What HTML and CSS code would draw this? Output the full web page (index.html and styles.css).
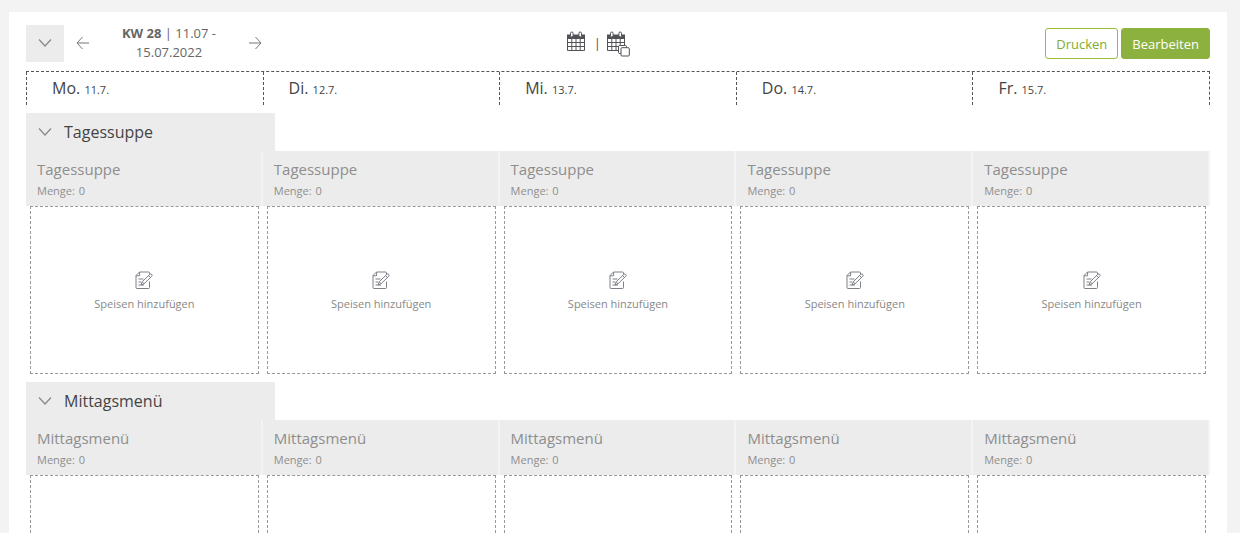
FILE: index.html
```html
<!DOCTYPE html>
<html lang="de">
<head>
<meta charset="utf-8">
<title>Speiseplan KW 28</title>
<link rel="stylesheet" href="styles.css">
</head>
<body>
<svg class="defs" aria-hidden="true">
  <symbol id="chevron" viewBox="0 0 14 10"><path d="M1 1.500 7 8 13 1.500"/></symbol>
  <symbol id="arrow" viewBox="0 0 14 14"><path d="M1 7H13M7.500 1 13 7 7.500 13"/></symbol>
  <symbol id="calendar" viewBox="0 0 20 21">
    <path fill="none" stroke="currentColor" stroke-width="1" d="M1.500 4V19.500H18.500V4M1.500 11.500H18.500M1.500 15.500H18.500M5.800 7V19.400M10 7V19.400M14.200 7V19.400"/>
    <path fill="currentColor" d="M1 3.500H19V8H1Z"/>
    <rect x="4.500" y="1" width="2.600" height="5" rx="1.300" fill="#fff" stroke="currentColor"/>
    <rect x="12.900" y="1" width="2.600" height="5" rx="1.300" fill="#fff" stroke="currentColor"/>
  </symbol>
  <symbol id="note" viewBox="0 0 18 18">
    <path d="M14.500 10.500V16.500Q14.500 17.500 13.500 17.500H2Q1 17.500 1 16.500V4.500L4.500 1H13.500Q14.500 1 14.500 2V3M1 4.800H4.600V1M3.500 8H8.500M3.500 11H6M3.500 14H9"/>
    <path d="M6 14 7.200 10.800 15 3.200Q16 2.500 16.800 3.400 17.600 4.300 16.800 5.200L9 12.800ZM7.200 10.800 9 12.800M13.600 4.600 15.400 6.500"/>
  </symbol>
</svg>
<main class="page">
  <div class="card">
    <header class="toolbar">
      <div class="week">
        <button class="toggle" type="button" aria-label="Alle einklappen"><svg class="chevron"><use href="#chevron"/></svg></button>
        <button class="arrow" type="button" aria-label="Vorherige Woche"><svg class="flip"><use href="#arrow"/></svg></button>
        <p class="range"><strong>KW 28</strong> | 11.07 - 15.07.2022</p>
        <button class="arrow" type="button" aria-label="Nächste Woche"><svg><use href="#arrow"/></svg></button>
      </div>
      <div class="views">
        <button type="button" aria-label="Kalender"><svg class="calendar"><use href="#calendar"/></svg></button>
        <span class="divider">|</span>
        <button type="button" aria-label="Kalender kopieren">
          <svg class="copy" viewBox="0 0 24 26">
            <use href="#calendar" width="20" height="21"/>
            <g fill="#fff" stroke="currentColor"><rect x="12.500" y="14.500" width="8" height="8" rx="1"/><rect x="15" y="16.700" width="8.300" height="8.300" rx="1"/></g>
          </svg>
        </button>
      </div>
      <div class="actions">
        <button class="btn" type="button">Drucken</button>
        <button class="btn primary" type="button">Bearbeiten</button>
      </div>
    </header>
    <div class="days">
      <div class="day">Mo. <small>11.7.</small></div>
      <div class="day">Di. <small>12.7.</small></div>
      <div class="day">Mi. <small>13.7.</small></div>
      <div class="day">Do. <small>14.7.</small></div>
      <div class="day">Fr. <small>15.7.</small></div>
    </div>
    <section class="group">
      <h2><button type="button"><svg class="chevron"><use href="#chevron"/></svg>Tagessuppe</button></h2>
      <div class="row">
        <article><div class="head"><h3>Tagessuppe</h3><p>Menge: <span>0</span></p></div><button class="add" type="button"><svg class="note"><use href="#note"/></svg>Speisen hinzufügen</button></article>
        <article><div class="head"><h3>Tagessuppe</h3><p>Menge: <span>0</span></p></div><button class="add" type="button"><svg class="note"><use href="#note"/></svg>Speisen hinzufügen</button></article>
        <article><div class="head"><h3>Tagessuppe</h3><p>Menge: <span>0</span></p></div><button class="add" type="button"><svg class="note"><use href="#note"/></svg>Speisen hinzufügen</button></article>
        <article><div class="head"><h3>Tagessuppe</h3><p>Menge: <span>0</span></p></div><button class="add" type="button"><svg class="note"><use href="#note"/></svg>Speisen hinzufügen</button></article>
        <article><div class="head"><h3>Tagessuppe</h3><p>Menge: <span>0</span></p></div><button class="add" type="button"><svg class="note"><use href="#note"/></svg>Speisen hinzufügen</button></article>
      </div>
    </section>
    <section class="group">
      <h2><button type="button"><svg class="chevron"><use href="#chevron"/></svg>Mittagsmenü</button></h2>
      <div class="row">
        <article><div class="head"><h3>Mittagsmenü</h3><p>Menge: <span>0</span></p></div><button class="add" type="button" aria-label="Hinzufügen"></button></article>
        <article><div class="head"><h3>Mittagsmenü</h3><p>Menge: <span>0</span></p></div><button class="add" type="button" aria-label="Hinzufügen"></button></article>
        <article><div class="head"><h3>Mittagsmenü</h3><p>Menge: <span>0</span></p></div><button class="add" type="button" aria-label="Hinzufügen"></button></article>
        <article><div class="head"><h3>Mittagsmenü</h3><p>Menge: <span>0</span></p></div><button class="add" type="button" aria-label="Hinzufügen"></button></article>
        <article><div class="head"><h3>Mittagsmenü</h3><p>Menge: <span>0</span></p></div><button class="add" type="button" aria-label="Hinzufügen"></button></article>
      </div>
    </section>
  </div>
</main>
</body>
</html>
```
FILE: styles.css
```css
* { box-sizing: border-box; }
body, h2, h3, p { margin: 0; font-weight: 400; }
body { background: #f3f3f3; color: #444; font-family: "Open Sans", sans-serif; font-size: 13px; }
button { padding: 0; border: 0; background: none; color: inherit; font: inherit; cursor: pointer; }
svg { display: block; }
.defs { position: absolute; width: 0; height: 0; }
.page { height: 100vh; overflow: hidden; padding: 12px 13px 0 9px; }
.card { min-height: 100%; padding: 12px 17px; background: #fff; }

.toolbar { display: grid; grid-template-columns: 46% auto 1fr; align-items: start; height: 47px; }
.week { display: flex; align-items: center; }
.toggle { display: grid; place-items: center; width: 38px; height: 37px; background: #ececec; }
.chevron { width: 14px; height: 10px; fill: none; stroke: #888; stroke-width: 1.200; }
.arrow { padding: 12px; }
.arrow svg { width: 14px; height: 14px; fill: none; stroke: #777; }
.arrow .flip { transform: scaleX(-1); }
.range { width: 134px; padding: 0 12px; color: #666; line-height: 19px; text-align: center; }
.range strong { font-weight: 700; }
.views { display: flex; align-items: flex-start; gap: 8px; margin-left: -5px; padding-top: 7px; color: #505256; }
.calendar { width: 20px; height: 21px; }
.copy { width: 24px; height: 26px; }
.divider { width: 4px; line-height: 24px; }
.actions { display: flex; justify-content: flex-end; gap: 3px; padding-top: 4px; }
.btn { height: 31px; padding: 0 10px; border: 1px solid #9bbf3b; border-radius: 3px; color: #82ad2b; font-weight: 500; }
.btn.primary { border-color: #8db13e; background: #8db13e; color: #fff; }

.days { display: grid; grid-template-columns: repeat(5, 1fr); height: 34px; border-top: 1px dashed #555; border-right: 1px dashed #555; }
.day { padding-left: 25px; border-left: 1px dashed #555; font-size: 16px; line-height: 33px; height: 33px; }
.day small { font-size: 11px; }

.group { margin-top: 8px; }
.group h2 { width: 21%; background: #ececec; }
.group h2 button { display: flex; align-items: center; gap: 12px; width: 100%; height: 38px; padding-left: 12px; color: #444; font-size: 16px; }
.row { display: grid; grid-template-columns: repeat(5, 1fr); }
.head { height: 55px; padding: 6px 11px; border-right: 2px solid #f3f3f3; background: #ececec; color: #8e8e8e; }
.head h3 { font-size: 15px; line-height: 24px; }
.head p { font-size: 11px; line-height: 20px; }
.head span { margin-left: 1px; }
.add { display: flex; flex-direction: column; align-items: center; justify-content: center; gap: 7px; width: calc(100% - 8px); height: 168px; margin: 0 4px; padding-top: 2px; border: 1px dashed #999; color: #888; font-size: 11px; }
.note { width: 18px; height: 18px; fill: none; stroke: #7d8087; }
```
